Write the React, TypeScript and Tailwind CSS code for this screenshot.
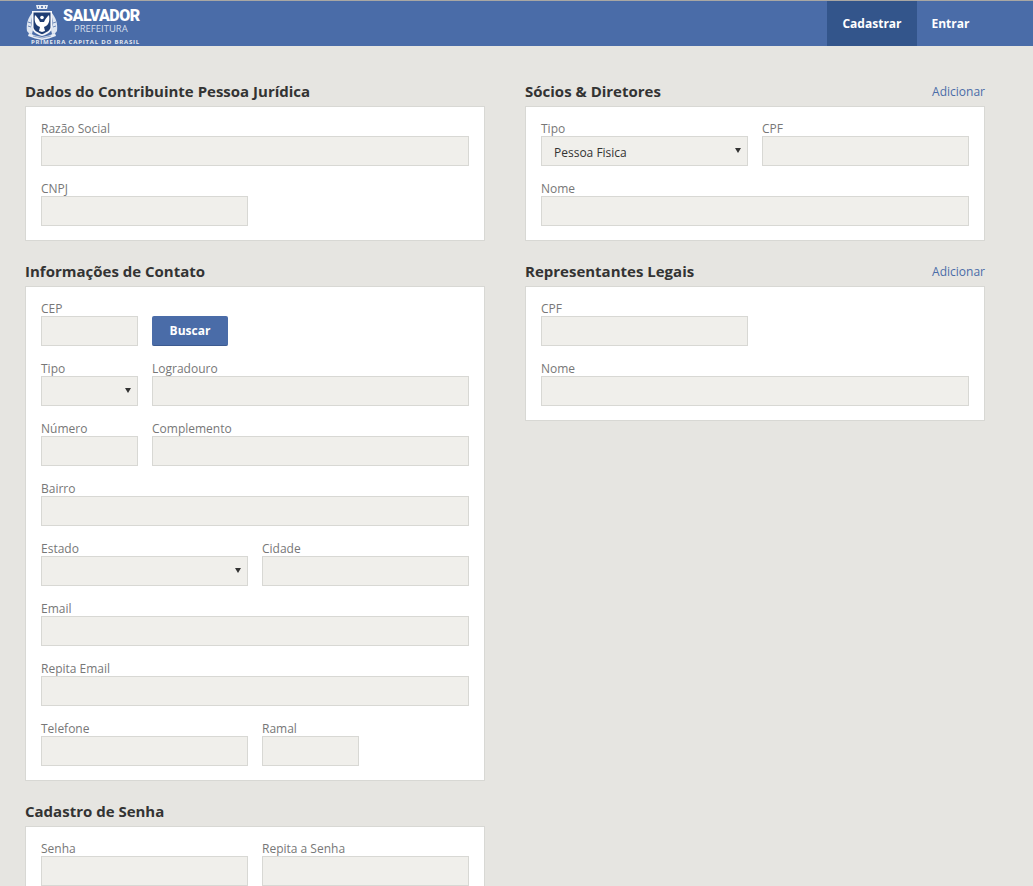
const F = "font-['Open_Sans',sans-serif]";

function Crest() {
  return (
    <svg width="32" height="37" viewBox="0 0 32 37" className="block">
      {/* crown */}
      <path d="M10 1h12l-1 4H11z" fill="#e8edf5" />
      <path d="M12 2h1v2h-1zM15 2h2v2h-2zM19 2h1v2h-1z" fill="#6d88b8" />
      {/* side ornaments */}
      <path d="M6 9C2 14 0 20 1 27c1 2 3 3 5 3l1-4C5 22 5 15 7 10z" fill="#dfe6f1" />
      <path d="M26 9c4 5 6 11 5 18-1 2-3 3-5 3l-1-4c2-4 2-11 0-16z" fill="#dfe6f1" />
      <path d="M2 18l3 1M2 22l3 1M30 18l-3 1M30 22l-3 1" stroke="#6d88b8" strokeWidth="1" />
      {/* shield */}
      <path d="M6 7h20v16c0 4-3 7-10 9C9 30 6 27 6 23z" fill="#f4f6fa" />
      <path d="M7.500 8.500h17V23c0 3-3 5-8.500 7.300C10.500 28 7.500 26 7.500 23z" fill="#1f3d73" />
      {/* dove */}
      <path d="M9 11c2 2 4 4 5 7h4c1-3 3-5 5-7 1 5 0 9-3 11l-2 1 1 4-3 1-3-1 1-4-2-1c-3-2-4-6-3-11z" fill="#fff" />
      <circle cx="16" cy="13.500" r="1.800" fill="#fff" />
      {/* ribbon */}
      <path d="M3 29c4 2 8 3 13 4 5-1 9-2 13-4l1 3c-5 2-9 3-14 4-5-1-9-2-14-4z" fill="#e8edf5" />
      <path d="M7 32l9 2 9-2" stroke="#6d88b8" strokeWidth="0.7" fill="none" />
    </svg>
  );
}

function Label({ children }: { children: string }) {
  return <div className="h-[14px] text-[12px] leading-[14px] text-[#777]">{children}</div>;
}

function Field({ label, className }: { label: string; className: string }) {
  return (
    <div className={className}>
      <Label>{label}</Label>
      <input className="block h-[30px] w-full border border-[#d8d8d4] bg-[#f0efeb] outline-none" />
    </div>
  );
}

function Select({ label, className, value }: { label: string; className: string; value?: string }) {
  return (
    <div className={className}>
      <Label>{label}</Label>
      <div className="relative h-[30px]">
        <select
          defaultValue={value ?? ""}
          className={`${F} block h-[30px] w-full appearance-none rounded-none border border-[#d8d8d4] bg-[#f0efeb] pl-3 pt-[3px] text-[12px] text-[#333] outline-none`}
        >
          <option value={value ?? ""}>{value ?? ""}</option>
        </select>
        <svg width="6" height="5" viewBox="0 0 6 5" className="absolute right-[7px] top-[12px]">
          <path d="M0 0h6L3 5z" fill="#333" />
        </svg>
      </div>
    </div>
  );
}

function Row({ children }: { children: React.ReactNode }) {
  return <div className="flex gap-[14px]">{children}</div>;
}

function Section({ title, action, children }: { title: string; action?: boolean; children: React.ReactNode }) {
  return (
    <section className="mb-[15px]">
      <div className="flex h-[30px] items-center justify-between">
        <h2 className="text-[15px] font-bold leading-[30px] text-[#333]">{title}</h2>
        {action && <a className="pt-[2px] text-[12px] text-[#4a6ca8]">Adicionar</a>}
      </div>
      <div className="flex flex-col gap-4 border border-[#d8d8d4] bg-white px-[15px] pb-[14px] pt-[15px]">{children}</div>
    </section>
  );
}

export default function App() {
  return (
    <div className={`${F} h-[886px] overflow-hidden bg-[#e6e5e1]`}>
      <header className="relative flex h-[46px] border-t border-[#a9a7a3] bg-[#4a6ca8] pl-[26px]">
        <div className="flex gap-[5px] pt-[3px]">
          <Crest />
          <div className="relative w-[80px]">
            <div className="absolute left-0 top-[4px] whitespace-nowrap font-['Roboto',sans-serif] text-[16px] font-black leading-[16px] tracking-[-0.5px] text-white">SALVADOR</div>
            <div className="absolute left-[11px] top-[20px] whitespace-nowrap text-[9.5px] leading-[10px] text-[#d5deec]">PREFEITURA</div>
          </div>
        </div>
        <div className="absolute left-[31px] top-[37px] whitespace-nowrap text-[6px] font-bold leading-[8px] tracking-[0.8px] text-[#e4e9f2]">PRIMEIRA CAPITAL DO BRASIL</div>
        <nav className="ml-auto mr-[49px] flex text-[12px] font-bold text-white">
          <a className="flex w-[90px] items-center justify-center bg-[#33558b]">Cadastrar</a>
          <a className="flex w-[67px] items-center justify-center">Entrar</a>
        </nav>
      </header>

      <main className="flex gap-10 pl-[25px] pt-[30px]">
        <div className="w-[460px] shrink-0">
          <Section title="Dados do Contribuinte Pessoa Jurídica">
            <Field label="Razão Social" className="w-full" />
            <Field label="CNPJ" className="w-[207px]" />
          </Section>
          <Section title="Informações de Contato">
            <Row>
              <Field label="CEP" className="w-[97px]" />
              <div className="pt-[14px]">
                <button className="h-[30px] w-[76px] rounded-[2px] border-b border-[#3c5a90] bg-[#4a6ca8] text-[12px] font-bold text-white">Buscar</button>
              </div>
            </Row>
            <Row>
              <Select label="Tipo" className="w-[97px]" />
              <Field label="Logradouro" className="flex-1" />
            </Row>
            <Row>
              <Field label="Número" className="w-[97px]" />
              <Field label="Complemento" className="flex-1" />
            </Row>
            <Field label="Bairro" className="w-full" />
            <Row>
              <Select label="Estado" className="w-[207px]" />
              <Field label="Cidade" className="flex-1" />
            </Row>
            <Field label="Email" className="w-full" />
            <Field label="Repita Email" className="w-full" />
            <Row>
              <Field label="Telefone" className="w-[207px]" />
              <Field label="Ramal" className="w-[97px]" />
            </Row>
          </Section>
          <Section title="Cadastro de Senha">
            <Row>
              <Field label="Senha" className="w-[207px]" />
              <Field label="Repita a Senha" className="flex-1" />
            </Row>
          </Section>
        </div>
        <div className="w-[460px] shrink-0">
          <Section title="Sócios & Diretores" action>
            <Row>
              <Select label="Tipo" className="w-[207px]" value="Pessoa Fisica" />
              <Field label="CPF" className="flex-1" />
            </Row>
            <Field label="Nome" className="w-full" />
          </Section>
          <Section title="Representantes Legais" action>
            <Field label="CPF" className="w-[207px]" />
            <Field label="Nome" className="w-full" />
          </Section>
        </div>
      </main>
    </div>
  );
}
